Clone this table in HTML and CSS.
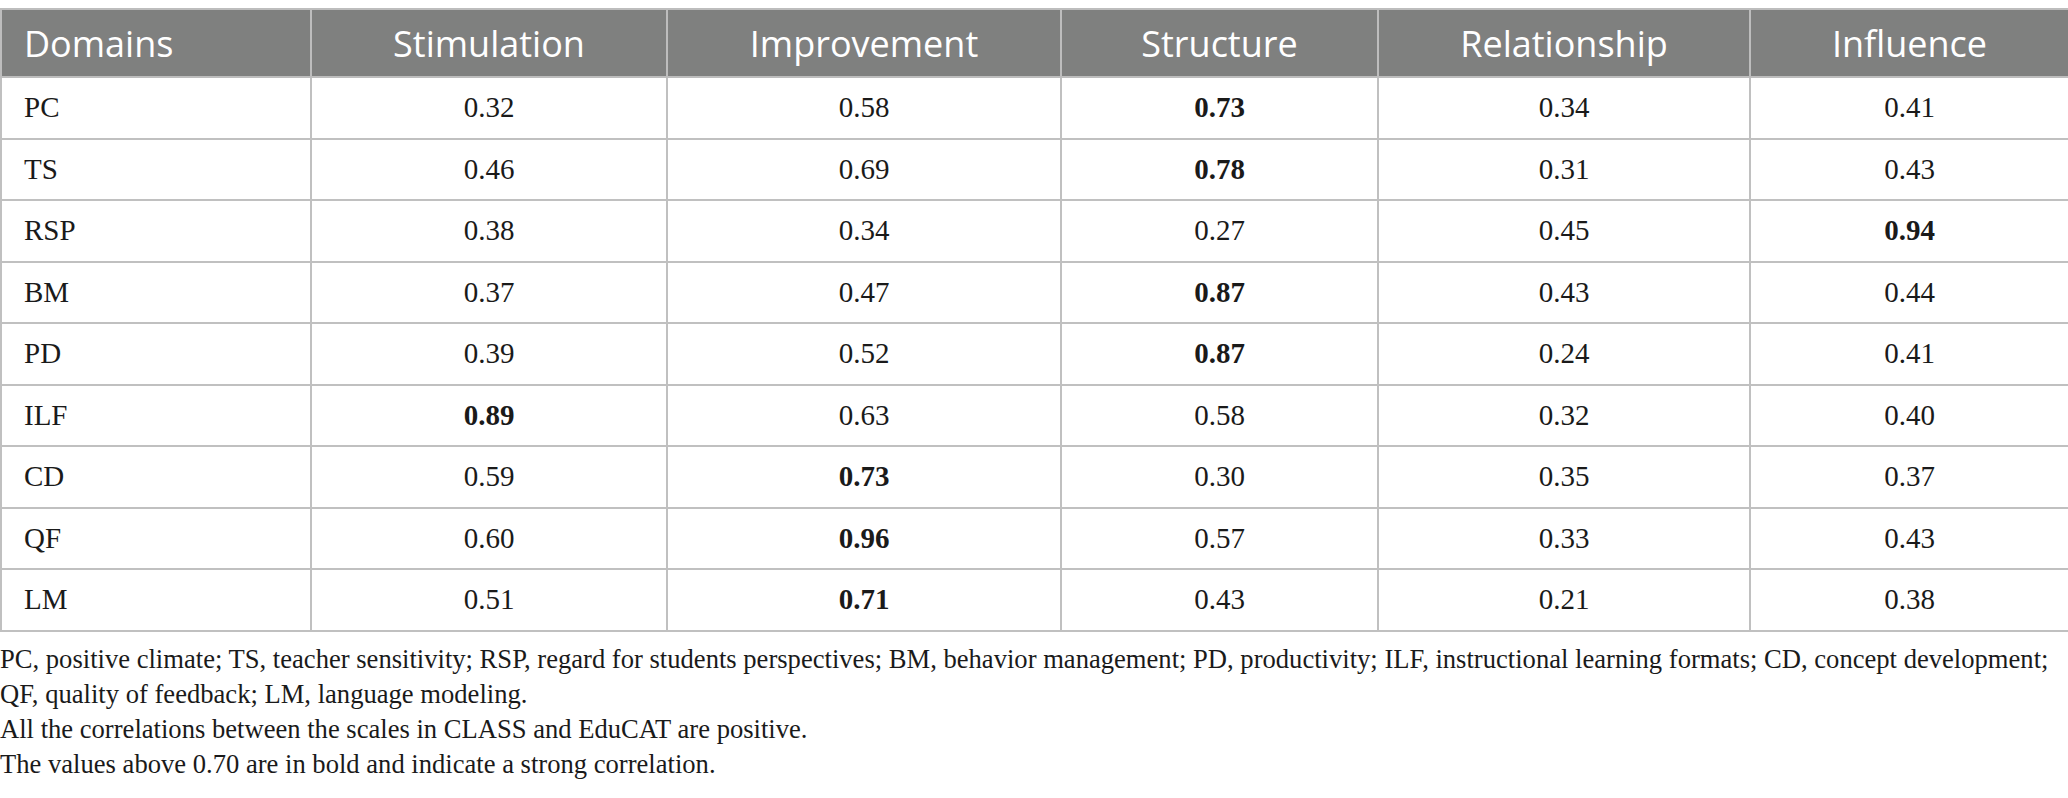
FILE: index.html
```html
<!DOCTYPE html>
<html lang="en">
<head>
<meta charset="utf-8">
<title>Correlations between CLASS and EduCAT</title>
<link rel="stylesheet" href="styles.css">
</head>
<body>
<div class="wrap">
<table class="data">
  <colgroup>
    <col class="c1"><col class="c2"><col class="c3"><col class="c4"><col class="c5"><col class="c6">
  </colgroup>
  <thead>
    <tr><th class="first">Domains</th><th>Stimulation</th><th>Improvement</th><th>Structure</th><th>Relationship</th><th>Influence</th></tr>
  </thead>
  <tbody>
    <tr><td class="first">PC</td><td>0.32</td><td>0.58</td><td><b>0.73</b></td><td>0.34</td><td>0.41</td></tr>
    <tr><td class="first">TS</td><td>0.46</td><td>0.69</td><td><b>0.78</b></td><td>0.31</td><td>0.43</td></tr>
    <tr><td class="first">RSP</td><td>0.38</td><td>0.34</td><td>0.27</td><td>0.45</td><td><b>0.94</b></td></tr>
    <tr><td class="first">BM</td><td>0.37</td><td>0.47</td><td><b>0.87</b></td><td>0.43</td><td>0.44</td></tr>
    <tr><td class="first">PD</td><td>0.39</td><td>0.52</td><td><b>0.87</b></td><td>0.24</td><td>0.41</td></tr>
    <tr><td class="first">ILF</td><td><b>0.89</b></td><td>0.63</td><td>0.58</td><td>0.32</td><td>0.40</td></tr>
    <tr><td class="first">CD</td><td>0.59</td><td><b>0.73</b></td><td>0.30</td><td>0.35</td><td>0.37</td></tr>
    <tr><td class="first">QF</td><td>0.60</td><td><b>0.96</b></td><td>0.57</td><td>0.33</td><td>0.43</td></tr>
    <tr><td class="first">LM</td><td>0.51</td><td><b>0.71</b></td><td>0.43</td><td>0.21</td><td>0.38</td></tr>
  </tbody>
</table>
<div class="notes">
  <p>PC, positive climate; TS, teacher sensitivity; RSP, regard for students perspectives; BM, behavior management; PD, productivity; ILF, instructional learning formats; CD, concept development; QF, quality of feedback; LM, language modeling.</p>
  <p>All the correlations between the scales in CLASS and EduCAT are positive.</p>
  <p>The values above 0.70 are in bold and indicate a strong correlation.</p>
</div>
</div>
</body>
</html>
```
FILE: styles.css
```css
html, body {
  margin: 0;
  padding: 0;
  background: #ffffff;
}
.wrap {
  padding-top: 8px;
  width: 2068px;
}
.data {
  width: 2068px;
  border-collapse: collapse;
  table-layout: fixed;
  font-family: "Liberation Serif", "Times New Roman", serif;
  color: #1a1a1a;
}
.c1 { width: 310px; }
.c2 { width: 356px; }
.c3 { width: 394px; }
.c4 { width: 317px; }
.c5 { width: 372px; }
.c6 { width: 319px; }
.data th {
  background: #7f807f;
  color: #ffffff;
  font-family: "Open Sans", "Noto Sans", sans-serif;
  font-weight: 400;
  font-size: 36px;
  height: 66px;
  padding: 0 22px;
  text-align: center;
  border: 2px solid #bdbdbd;
}
.data td {
  height: 59.5px;
  padding: 0 22px;
  font-size: 29px;
  text-align: center;
  border: 2px solid #c0c0c0;
}
.data .first {
  text-align: left;
}
.data b {
  font-weight: 700;
}
.notes {
  font-family: "Liberation Serif", "Times New Roman", serif;
  font-size: 26.6px;
  line-height: 35px;
  color: #1a1a1a;
  padding-top: 10px;
}
.notes p {
  margin: 0;
}
```
